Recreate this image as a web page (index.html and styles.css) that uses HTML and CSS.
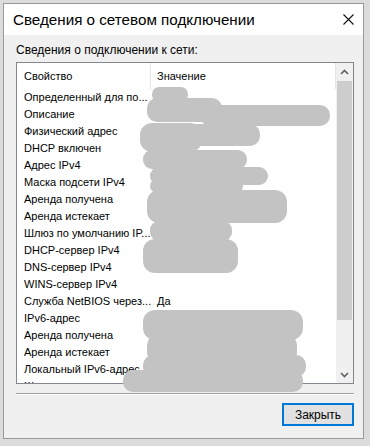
FILE: index.html
```html
<!DOCTYPE html>
<html lang="ru">
<head>
    <meta charset="UTF-8">
    <title>Сведения о сетевом подключении</title>
    <link rel="stylesheet" href="styles.css">
</head>
<body>
    <div class="window">
        <div class="titlebar">
            <span class="title">Сведения о сетевом подключении</span>
            <button class="close" aria-label="Закрыть">
                <svg width="11" height="11" viewBox="0 0 11 11">
                    <path d="M0.5 0.5 L10.5 10.5 M10.5 0.5 L0.5 10.5" stroke="#111" stroke-width="1.1" fill="none"/>
                </svg>
            </button>
        </div>

        <div class="content">
            <p class="label">Сведения о подключении к сети:</p>

            <div class="list">
                <div class="list-body">
                    <div class="list-head">
                        <div class="col-name">Свойство</div>
                        <div class="col-value">Значение</div>
                    </div>
                    <div class="row"><div class="col-name">Определенный для по...</div><div class="col-value"></div></div>
                    <div class="row"><div class="col-name">Описание</div><div class="col-value"></div></div>
                    <div class="row"><div class="col-name">Физический адрес</div><div class="col-value"></div></div>
                    <div class="row"><div class="col-name">DHCP включен</div><div class="col-value"></div></div>
                    <div class="row"><div class="col-name">Адрес IPv4</div><div class="col-value"></div></div>
                    <div class="row"><div class="col-name">Маска подсети IPv4</div><div class="col-value"></div></div>
                    <div class="row"><div class="col-name">Аренда получена</div><div class="col-value"></div></div>
                    <div class="row"><div class="col-name">Аренда истекает</div><div class="col-value"></div></div>
                    <div class="row"><div class="col-name">Шлюз по умолчанию IP...</div><div class="col-value"></div></div>
                    <div class="row"><div class="col-name">DHCP-сервер IPv4</div><div class="col-value"></div></div>
                    <div class="row"><div class="col-name">DNS-сервер IPv4</div><div class="col-value"></div></div>
                    <div class="row"><div class="col-name">WINS-сервер IPv4</div><div class="col-value"></div></div>
                    <div class="row"><div class="col-name">Служба NetBIOS через...</div><div class="col-value">Да</div></div>
                    <div class="row"><div class="col-name">IPv6-адрес</div><div class="col-value"></div></div>
                    <div class="row"><div class="col-name">Аренда получена</div><div class="col-value"></div></div>
                    <div class="row"><div class="col-name">Аренда истекает</div><div class="col-value"></div></div>
                    <div class="row"><div class="col-name">Локальный IPv6-адрес...</div><div class="col-value"></div></div>
                    <div class="row"><div class="col-name">Шлюз по умолчанию IP...</div><div class="col-value"></div></div>
                </div>
                <div class="scrollbar">
                    <div class="sb-btn">
                        <svg width="9" height="6" viewBox="0 0 9 6"><path d="M1 5 L4.5 1.5 L8 5" stroke="#606060" stroke-width="1.6" fill="none"/></svg>
                    </div>
                    <div class="sb-track"><div class="sb-thumb"></div></div>
                    <div class="sb-btn">
                        <svg width="9" height="6" viewBox="0 0 9 6"><path d="M1 1 L4.5 4.5 L8 1" stroke="#606060" stroke-width="1.6" fill="none"/></svg>
                    </div>
                </div>
            </div>

            <div class="separator"></div>

            <div class="actions">
                <button class="btn">Закрыть</button>
            </div>
        </div>
    </div>

    <!-- закрашенные значения -->
    <svg class="redact" width="370" height="446" viewBox="0 0 370 446">
        <g fill="#c3c3c3">
            <rect x="152" y="87" width="36" height="15" rx="7"/>
            <rect x="147" y="98" width="75" height="24" rx="10"/>
            <rect x="200" y="105" width="130" height="21" rx="10"/>
            <rect x="140" y="123" width="62" height="29" rx="12"/>
            <rect x="170" y="124" width="90" height="22" rx="10"/>
            <rect x="143" y="150" width="104" height="19" rx="9"/>
            <rect x="150" y="167" width="118" height="18" rx="9"/>
            <rect x="150" y="179" width="93" height="14" rx="7"/>
            <rect x="147" y="190" width="140" height="33" rx="12"/>
            <rect x="150" y="221" width="82" height="20" rx="9"/>
            <rect x="143" y="239" width="95" height="34" rx="12"/>
            <rect x="143" y="310" width="160" height="30" rx="12"/>
            <rect x="147" y="334" width="150" height="30" rx="12"/>
            <rect x="143" y="355" width="163" height="22" rx="10"/>
            <rect x="123" y="370" width="180" height="22" rx="10"/>
        </g>
    </svg>
</body>
</html>
```

FILE: styles.css
```css
* {
    margin: 0;
    padding: 0;
    box-sizing: border-box;
}

body {
    width: 370px;
    height: 446px;
    background: #dcdcdc;
    font-family: "Liberation Sans", Arial, sans-serif;
    font-size: 12px;
    color: #000;
    position: relative;
    overflow: hidden;
}

.window {
    margin: 3px 0 0 3px;
    width: 361px;
    height: 436px;
    border: 1px solid #9a9a9a;
    background: #f0f0f0;
    display: flex;
    flex-direction: column;
}

.titlebar {
    height: 31px;
    background: #fff;
    display: flex;
    align-items: center;
    justify-content: space-between;
    padding-left: 9px;
    padding-right: 2px;
}

.title {
    font-size: 15.2px;
}

.close {
    width: 26px;
    height: 31px;
    border: none;
    background: transparent;
    display: flex;
    align-items: center;
    justify-content: center;
}

.content {
    flex: 1;
    padding: 0 9px 0 12px;
    display: flex;
    flex-direction: column;
}

.label {
    padding: 8px 0 0 0;
    height: 27px;
    line-height: 15px;
}

.list {
    height: 322px;
    border: 1px solid #828790;
    background: #fff;
    display: flex;
    font-size: 11px;
}

.list-body {
    flex: 1;
    overflow: hidden;
}

.list-head,
.row {
    display: grid;
    grid-template-columns: 134px 1fr;
}

.list-head {
    height: 26px;
    line-height: 26px;
}

.list-head .col-name,
.list-head .col-value {
    border-right: 1px solid #e5e5e5;
}

.row {
    height: 17px;
    line-height: 17px;
}

.col-name {
    padding-left: 7px;
    white-space: nowrap;
    overflow: hidden;
}

.col-value {
    padding-left: 6px;
    white-space: nowrap;
}

.scrollbar {
    width: 17px;
    background: #f0f0f0;
    display: flex;
    flex-direction: column;
}

.sb-btn {
    height: 17px;
    display: flex;
    align-items: center;
    justify-content: center;
}

.sb-track {
    flex: 1;
    padding: 1px 1px 0 1px;
}

.sb-thumb {
    height: 239px;
    background: #cdcdcd;
}

.separator {
    margin-top: 9px;
    height: 2px;
    border-top: 1px solid #a0a0a0;
    border-bottom: 1px solid #fff;
}

.actions {
    display: flex;
    justify-content: flex-end;
    padding-top: 8px;
}

.btn {
    width: 72px;
    height: 23px;
    font-family: "Liberation Sans", Arial, sans-serif;
    font-size: 12px;
    background: #e1e1e1;
    border: 2px solid #0078d7;
    color: #000;
}

.redact {
    position: absolute;
    left: 0;
    top: 0;
}
```
